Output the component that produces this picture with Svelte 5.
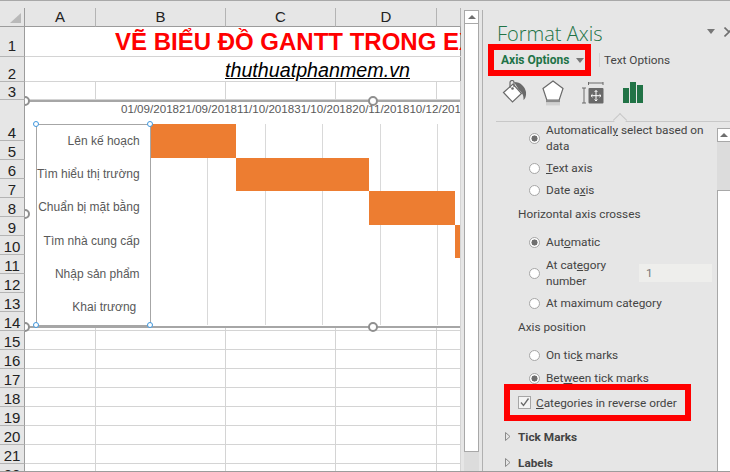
<script>
	const columns = ['A', 'B', 'C', 'D', ''];
	const rowHeights = [30, 25, 18, 41, 19, 19, 19, 19, 19, 19, 19, 19, 19, 19, 19, 19, 19, 19, 19, 19, 19, 19];
	const gridRows = [19, ...rowHeights].map((h) => h + 'px').join(' ');
	const dates = ['01/09/2018', '21/09/2018', '11/10/2018', '31/10/2018', '20/11/2018', '10/12/2018'];

	const tasks = [
		{ name: 'Lên kế hoạch', start: 0, width: 85 },
		{ name: 'Tìm hiểu thị trường', start: 85, width: 133 },
		{ name: 'Chuẩn bị mặt bằng', start: 218, width: 86 },
		{ name: 'Tìm nhà cung cấp', start: 304, width: 40 },
		{ name: 'Nhập sản phẩm', start: 0, width: 0 },
		{ name: 'Khai trương\u00a0', start: 0, width: 0 }
	];

	const bigHandles = [
		[0, 1],
		[0, 114],
		[0, 227],
		[348, 1],
		[348, 227]
	];
	const smallHandles = [
		[11, 24],
		[125, 24],
		[11, 225],
		[125, 225]
	];
</script>

<div class="window">
	<div class="sheet">
		<div class="grid" style="grid-template-rows: {gridRows}">
			<div class="corner"><span class="corner-mark"></span></div>
			{#each columns as col}
				<div class="colhead">{col}</div>
			{/each}

			{#each rowHeights as h, i}
				<div class="rowhead" class:top-row={i === 0}>{i + 1}</div>
				{#if i === 0}
					<div class="cell merged title-cell"><span class="title">VẼ BIỂU ĐỒ GANTT TRONG EXCEL</span></div>
				{:else if i === 1}
					<div class="cell merged link-cell"><span class="link">thuthuatphanmem.vn</span></div>
				{:else}
					{#each columns as col}
						<div class="cell"></div>
					{/each}
				{/if}
			{/each}
		</div>

		<div class="chart">
			<div class="dates">{dates.join('')}</div>
			<div class="chart-body">
				<div class="categories">
					{#each tasks as task}
						<div class="category">{task.name}</div>
					{/each}
				</div>
				<div class="plot">
					{#each tasks as task}
						<div class="lane">
							{#if task.width}
								<div class="bar" style="margin-left: {task.start}px; width: {task.width}px"></div>
							{/if}
						</div>
					{/each}
				</div>
			</div>

			{#each bigHandles as [x, y]}
				<span class="handle" style="left: {x}px; top: {y}px"></span>
			{/each}
			{#each smallHandles as [x, y]}
				<span class="handle small" style="left: {x}px; top: {y}px"></span>
			{/each}
		</div>
	</div>

	<div class="vscroll">
		<div class="vscroll-up"><span class="arrow-up"></span></div>
		<div class="vscroll-track"></div>
	</div>

	<div class="panel">
		<div class="panel-head">
			<h1>Format Axis</h1>
			<span class="menu-caret"></span>
			<svg class="close" width="6" height="10" viewBox="0 0 6 10">
				<path d="M0.5 0.5 L5 5 L0.5 9.5 M9 0.5 L5 5" fill="none" stroke="#6f6f6f" stroke-width="1.6" />
			</svg>
		</div>

		<div class="tabs">
			<div class="tab-active">Axis Options<span class="tab-caret"></span></div>
			<div class="tab-sep"></div>
			<div class="tab-other">Text Options</div>
		</div>

		<div class="icons">
			<svg width="26" height="26" viewBox="0 0 26 26">
				<path d="M1.5 12.5 L11 4 L19.5 13.5 L10.5 22 Z" fill="#fff" stroke="#6a6a6a" stroke-width="1.2" />
				<path d="M8 8 L8 2.5 A2 2 0 0 1 12 2.5 L12 7" fill="none" stroke="#6a6a6a" stroke-width="1.2" />
				<circle cx="10.5" cy="8.5" r="1.3" fill="#6a6a6a" />
				<path d="M12 2 C19 2 23 7 24 12 C24.5 16 23 19 21.5 20 C22 16 20 12 17 10 Z" fill="#6a6a6a" />
			</svg>
			<svg class="pentagon" width="22" height="26" viewBox="0 0 22 26">
				<path d="M11 1 L21 8.5 L17.2 20 L4.8 20 L1 8.5 Z" fill="#fff" stroke="#6a6a6a" stroke-width="1.2" />
				<rect x="4" y="20" width="14" height="2.4" fill="#8a8a8a" />
				<rect x="4" y="22.4" width="14" height="3" fill="#d0d0d0" />
			</svg>
			<svg width="22" height="22" viewBox="0 0 22 22">
				<path d="M6.5 1 H21 M6.5 0 V3 M21 0 V3 M0 6 H4 M0 21 H4 M2 6 V21" fill="none" stroke="#6a6a6a" stroke-width="1" />
				<rect x="6.5" y="6" width="15" height="15.5" rx="1" fill="#6a6a6a" />
				<path d="M14 8.5 V19 M9 13.7 H19 M12.6 10 L14 8.5 L15.4 10 M12.6 17.5 L14 19 L15.4 17.5 M10.5 12.3 L9 13.7 L10.5 15.1 M17.5 12.3 L19 13.7 L17.5 15.1" fill="none" stroke="#fff" stroke-width="1" />
			</svg>
			<svg class="active-icon" width="20" height="21" viewBox="0 0 20 21">
				<rect x="0" y="6" width="6" height="15" fill="#217346" />
				<rect x="7" y="0" width="6" height="21" fill="#217346" />
				<rect x="14" y="3" width="6" height="18" fill="#217346" />
			</svg>
		</div>

		<div class="panel-body">
			<div class="options">
				<div class="opt two-line">
					<span class="radio on"></span>
					<span>Automaticall<u>y</u> select based on<br />data</span>
				</div>
				<div class="opt gap-t"><span class="radio"></span><span><u>T</u>ext axis</span></div>
				<div class="opt"><span class="radio"></span><span>Date a<u>x</u>is</span></div>
				<div class="heading gap-h">Horizontal axis crosses</div>
				<div class="opt gap-m"><span class="radio on"></span><span>Aut<u>o</u>matic</span></div>
				<div class="opt two-line gap-s">
					<span class="radio"></span>
					<span class="cat-label">At cat<u>e</u>gory<br />number</span>
					<span class="number-input">1</span>
				</div>
				<div class="opt gap-x"><span class="radio"></span><span>At maximum cate<u>g</u>ory</span></div>
				<div class="heading gap-p">Axis position</div>
				<div class="opt gap-m"><span class="radio"></span><span>On tic<u>k</u> marks</span></div>
				<div class="opt gap-xs"><span class="radio on"></span><span>Bet<u>w</u>een tick marks</span></div>
				<div class="reverse-box">
					<span class="checkbox">
						<svg width="11" height="11" viewBox="0 0 11 11">
							<path d="M2 5.5 L4.5 8.5 L9.5 1.5" fill="none" stroke="#6a6a6a" stroke-width="1.3" />
						</svg>
					</span>
					<span><u>C</u>ategories in reverse order</span>
				</div>
				<div class="section first-section">
					<svg class="expander" width="6" height="9" viewBox="0 0 6 9"><path d="M0.5 0.5 L5 4.5 L0.5 8.5 Z" fill="none" stroke="#8a8a8a" /></svg>
					Tick Marks
				</div>
				<div class="section">
					<svg class="expander" width="6" height="9" viewBox="0 0 6 9"><path d="M0.5 0.5 L5 4.5 L0.5 8.5 Z" fill="none" stroke="#8a8a8a" /></svg>
					Labels
				</div>
			</div>
			<div class="panel-scroll">
				<div class="panel-scroll-up"><span class="arrow-up"></span></div>
				<div class="panel-scroll-thumb"></div>
				<div class="panel-scroll-track"></div>
			</div>
		</div>
	</div>
</div>

<style>
	:global(body) {
		margin: 0;
	}
	.window {
		display: flex;
		width: 730px;
		height: 472px;
		box-sizing: border-box;
		overflow: hidden;
		background: #e6e6e6;
		border-top: 1px solid #a8a8a8;
		border-bottom: 1px solid #9c9c9c;
		font-family: 'Liberation Sans', Arial, sans-serif;
	}

	/* worksheet */
	.sheet {
		position: relative;
		width: 461px;
		height: 463px;
		margin-top: 7px;
		flex: none;
		overflow: hidden;
	}
	.grid {
		display: grid;
		grid-template-columns: 25px 71px 130px 110px 101px 24px;
		background: #fff;
		border-right: 1px solid #9c9c9c;
		box-sizing: border-box;
		width: 461px;
	}
	.corner,
	.colhead {
		box-sizing: border-box;
		background: #e6e6e6;
		border-bottom: 1px solid #9c9c9c;
	}
	.corner {
		position: relative;
		border-right: 1px solid #9c9c9c;
	}
	.corner-mark {
		position: absolute;
		left: 10px;
		top: 5px;
		width: 0;
		height: 0;
		border-left: 11px solid transparent;
		border-bottom: 10px solid #b9b9b9;
	}
	.colhead {
		border-right: 1px solid #b4b4b4;
		font-size: 15px;
		line-height: 18px;
		text-align: center;
		color: #222;
	}
	.colhead:last-of-type {
		border-right: none;
	}
	.rowhead {
		box-sizing: border-box;
		display: flex;
		align-items: flex-end;
		justify-content: center;
		overflow: hidden;
		background: #e6e6e6;
		border-right: 1px solid #9c9c9c;
		border-bottom: 1px solid #b4b4b4;
		font-size: 15px;
		line-height: 14px;
		color: #222;
	}
	.rowhead.top-row {
		padding-bottom: 3px;
	}
	.cell {
		box-sizing: border-box;
		border-right: 1px solid #d4d4d4;
		border-bottom: 1px solid #d4d4d4;
		min-width: 0;
		min-height: 0;
	}
	.merged {
		grid-column: span 5;
		display: flex;
		align-items: center;
		overflow: hidden;
		white-space: nowrap;
		border-right: none;
	}
	.title-cell {
		padding-left: 90px;
	}
	.title {
		font-size: 24px;
		font-weight: 700;
		line-height: 29px;
		color: #ff0000;
	}
	.link-cell {
		padding: 2px 0 0 200px;
	}
	.link {
		font-size: 19.7px;
		font-style: italic;
		line-height: 22px;
		text-decoration: underline;
		color: #000;
	}

	/* chart sits over the cells */
	.chart {
		position: absolute;
		left: 25px;
		top: 92px;
		width: 435px;
		height: 228px;
		box-sizing: border-box;
		background: #fff;
		border-top: 2px solid #a6a6a6;
		border-bottom: 2px solid #a6a6a6;
		clip-path: inset(-6px 0 -6px 0);
	}
	.dates {
		height: 21px;
		padding: 1px 0 0 96px;
		font-size: 11.6px;
		line-height: 12px;
		color: #595959;
		white-space: nowrap;
	}
	.chart-body {
		display: flex;
		margin-left: 11px;
	}
	.categories {
		width: 115px;
		height: 202px;
		box-sizing: border-box;
		flex: none;
		display: grid;
		grid-template-rows: repeat(6, 1fr);
		border: 1.5px solid #a6a6a6;
		padding-right: 11px;
	}
	.category {
		display: flex;
		align-items: center;
		justify-content: flex-end;
		padding-bottom: 2px;
		font-size: 12px;
		color: #595959;
		white-space: nowrap;
	}
	.plot {
		flex: 1;
		height: 201px;
		display: grid;
		grid-template-rows: repeat(6, 1fr);
		background-image: repeating-linear-gradient(
			to right,
			transparent 0,
			transparent 56.4px,
			#d9d9d9 56.4px,
			#d9d9d9 57.4px
		);
		overflow: hidden;
	}
	.bar {
		height: 100%;
		background: #ed7d31;
	}
	.handle {
		position: absolute;
		width: 10px;
		height: 10px;
		margin: -7px 0 0 -5px;
		box-sizing: border-box;
		border: 2px solid #8f8f8f;
		border-radius: 50%;
		background: #fff;
	}
	.handle.small {
		width: 6px;
		height: 6px;
		margin: -5px 0 0 -3px;
		border: 1.5px solid #3f97dd;
	}

	/* sheet scrollbar */
	.vscroll {
		width: 15px;
		margin: 9px 0 0 3px;
		flex: none;
		display: flex;
		flex-direction: column;
		height: 462px;
		background: #dcdcdc;
	}
	.vscroll-up {
		height: 14px;
		background: #fff;
		border: 1px solid #a8a8a8;
		box-sizing: border-box;
		display: flex;
		align-items: center;
		justify-content: center;
	}
	.vscroll-track {
		height: 428px;
		background: #fff;
		border: 1px solid #a8a8a8;
		border-top: none;
		box-sizing: border-box;
	}
	.arrow-up {
		width: 0;
		height: 0;
		border-left: 4px solid transparent;
		border-right: 4px solid transparent;
		border-bottom: 4px solid #6f6f6f;
	}

	/* format pane */
	.panel {
		margin: 9px 0 0 3px;
		width: 248px;
		flex: none;
		box-sizing: border-box;
		border-left: 1px solid #b0b0b0;
		font-family: Roboto, 'Open Sans', sans-serif;
		font-size: 11.8px;
		color: #444;
		display: flex;
		flex-direction: column;
	}
	.panel-head {
		position: relative;
		height: 34px;
		padding: 14px 0 0 14px;
		box-sizing: border-box;
	}
	h1 {
		margin: 0;
		font-family: 'Open Sans', sans-serif;
		font-size: 20px;
		font-weight: 300;
		line-height: 20px;
		color: #217346;
	}
	.menu-caret {
		position: absolute;
		left: 224px;
		top: 19px;
		border-left: 4.5px solid transparent;
		border-right: 4.5px solid transparent;
		border-top: 5px solid #777;
	}
	.close {
		position: absolute;
		right: 0;
		top: 17px;
	}
	.tabs {
		display: flex;
		align-items: center;
		height: 32px;
		margin-left: 5px;
	}
	.tab-active {
		display: flex;
		align-items: center;
		width: 103px;
		height: 32px;
		box-sizing: border-box;
		border: 6px solid #ff0000;
		padding-left: 7px;
		font-size: 12px;
		font-weight: 700;
		color: #217346;
		white-space: nowrap;
	}
	.tab-caret {
		margin-left: 7px;
		border-left: 4px solid transparent;
		border-right: 4px solid transparent;
		border-top: 5px solid #777;
	}
	.tab-sep {
		width: 1px;
		height: 14px;
		margin: 0 4px 0 8px;
		background: #d2d2d2;
	}
	.tab-other {
		color: #444;
		white-space: nowrap;
	}
	.icons {
		position: relative;
		display: flex;
		align-items: center;
		gap: 18px;
		height: 46px;
		margin-left: 13px;
		padding: 0 0 12px 6px;
		box-sizing: border-box;
		border-bottom: 1px solid #c8c8c8;
	}
	.pentagon {
		margin-left: -4px;
	}
	.active-icon {
		margin-left: 1px;
	}
	.icons::after {
		content: '';
		position: absolute;
		left: 119px;
		bottom: -4px;
		width: 9px;
		height: 9px;
		background: #e6e6e6;
		border-left: 1px solid #c8c8c8;
		border-top: 1px solid #c8c8c8;
		transform: rotate(45deg);
	}

	.panel-body {
		flex: 1;
		display: flex;
		min-height: 0;
		overflow: hidden;
	}
	.options {
		flex: 1;
		padding-left: 35px;
		line-height: 16px;
		white-space: nowrap;
	}
	.opt {
		display: flex;
		align-items: center;
		gap: 6px;
		height: 22px;
		padding-left: 11px;
	}
	.opt.two-line {
		height: 32px;
	}
	.gap-xs {
		margin-top: 1px;
	}
	.gap-h {
		margin-top: 2px;
	}
	.gap-t {
		margin-top: 3px;
	}
	.gap-x {
		margin-top: 3px;
	}
	.gap-p {
		margin-top: 2px;
	}
	.gap-s {
		margin-top: 4px;
	}
	.gap-m {
		margin-top: 6px;
	}
	.heading {
		height: 22px;
		line-height: 22px;
	}
	.radio {
		width: 11px;
		height: 11px;
		flex: none;
		box-sizing: border-box;
		border: 1px solid #a6a6a6;
		border-radius: 50%;
		background: #fff;
	}
	.radio.on {
		background: radial-gradient(circle, #6f6f6f 0, #6f6f6f 2.8px, #fff 3.3px);
	}
	.cat-label {
		width: 87px;
	}
	.number-input {
		width: 73px;
		height: 18px;
		padding-left: 7px;
		box-sizing: border-box;
		line-height: 18px;
		background: #eeeeec;
		color: #777;
	}
	.reverse-box {
		display: flex;
		align-items: center;
		gap: 5px;
		width: 187px;
		height: 37px;
		margin: -5px 0 0 -14px;
		padding-left: 8px;
		box-sizing: border-box;
		border: 6px solid #ff0000;
	}
	.checkbox {
		width: 13px;
		height: 13px;
		flex: none;
		box-sizing: border-box;
		display: flex;
		align-items: center;
		justify-content: center;
		border: 1px solid #a6a6a6;
		background: #f4f4f4;
	}
	.section {
		position: relative;
		height: 26px;
		line-height: 26px;
		font-weight: 700;
	}
	.first-section {
		margin-top: 3px;
	}
	.expander {
		position: absolute;
		left: -13px;
		top: 8px;
	}
	.panel-scroll {
		width: 13px;
		flex: none;
		margin-top: 6px;
		display: flex;
		flex-direction: column;
	}
	.panel-scroll-up {
		height: 14px;
		box-sizing: border-box;
		background: #fff;
		border: 1px solid #a8a8a8;
		border-right: none;
		display: flex;
		align-items: center;
		justify-content: center;
	}
	.panel-scroll-thumb {
		height: 48px;
		background: #dcdcdc;
	}
	.panel-scroll-track {
		flex: 1;
		background: #fff;
		border-left: 1px solid #a8a8a8;
		border-top: 1px solid #a8a8a8;
	}
</style>
